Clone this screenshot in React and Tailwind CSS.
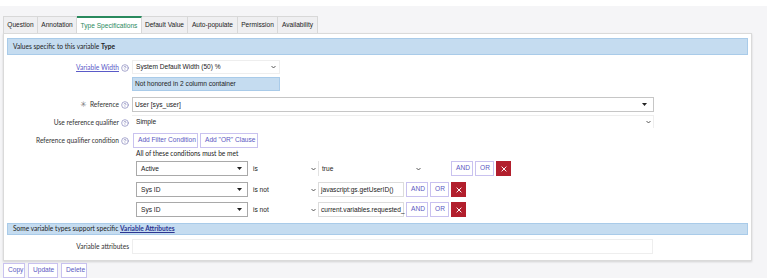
const arial = "font-['Liberation_Sans',Arial,sans-serif]";
const lato = "font-['Lato','Liberation_Sans',sans-serif]";

const Help = () => (
  <svg width="8" height="8" viewBox="0 0 24 24" fill="none" stroke="#8080b8" strokeWidth="2" strokeLinecap="round" className="shrink-0">
    <circle cx="12" cy="12" r="10" />
    <path d="M9.09 9a3 3 0 0 1 5.83 1c0 2-3 3-3 3" />
    <path d="M12 17h.01" />
  </svg>
);

const Chevron = () => (
  <svg width="5" height="4" viewBox="0 0 10 6" fill="none" stroke="#333" strokeWidth="1.6" className="shrink-0">
    <polyline points="1,1 5,5 9,1" />
  </svg>
);

const Caret = () => (
  <svg width="5" height="3" viewBox="0 0 10 6" className="shrink-0">
    <polygon points="0,0 10,0 5,6" fill="#222" />
  </svg>
);

const Tab = ({ label, w, active, first }) => (
  <div
    className={`h-[17px] flex items-center justify-center whitespace-nowrap border-r border-[#d8d8d8] text-[6.6px] ${arial} ${
      first ? 'border-l' : ''
    } ${
      active
        ? 'bg-white border-t-2 border-t-[#2a8a5e] text-[#2a8a5e]'
        : 'bg-[#efeff1] border-t border-t-[#d8d8d8] text-[#222]'
    }`}
    style={{ width: w }}
  >
    {label}
  </div>
);

const Btn = ({ children, className = '' }) => (
  <button
    className={`h-[15px] px-[4px] bg-white border border-[#c9c2ef] text-[#5b59c2] text-[6.6px] whitespace-nowrap ${arial} leading-none ${className}`}
  >
    {children}
  </button>
);

const Row = ({ label, help = true, children, className = '' }) => (
  <div className={`flex items-start ${className}`}>
    <div className={`w-[125px] h-[15px] flex items-center justify-end gap-[2px] pr-[3px] text-[6.6px] text-[#333] whitespace-nowrap ${lato}`}>
      {label}
      {help && <Help />}
    </div>
    {children}
  </div>
);

const Cond = ({ field, op, value, kind, gapLeft }) => (
  <div className={`flex items-center h-[15px] ${arial} text-[6.6px] text-[#222]`}>
    <div className="w-[112px] h-[15px] border border-[#a9a9a9] bg-white flex items-center justify-between pl-[4px] pr-[5px]">
      <span>{field}</span>
      <Caret />
    </div>
    <div className="w-[68px] h-[15px] ml-[2px] flex items-center justify-between pl-[3px] pr-[2px]">
      <span>{op}</span>
      <Chevron />
    </div>
    {kind === 'select' ? (
      <div className="w-[105px] h-[15px] border-l border-[#e2e2e2] flex items-center justify-between pl-[3px] pr-[2px]">
        <span>{value}</span>
        <Chevron />
      </div>
    ) : (
      <div className="w-[86px] h-[15px] border border-[#dcdcdc] flex items-center pl-[2px] whitespace-nowrap">
        {value}
      </div>
    )}
    <div className="flex items-center gap-[2px]" style={{ marginLeft: gapLeft }}>
      <Btn className="w-[22px] px-0">AND</Btn>
      <Btn className="w-[19px] px-0">OR</Btn>
      <div className="w-[15px] h-[15px] bg-[#b21f2d] flex items-center justify-center">
        <svg width="6" height="6" viewBox="0 0 10 10" stroke="white" strokeWidth="1.6">
          <line x1="1" y1="1" x2="9" y2="9" />
          <line x1="9" y1="1" x2="1" y2="9" />
        </svg>
      </div>
    </div>
  </div>
);

export default function App() {
  const tabs = [
    ['Question', 35],
    ['Annotation', 39],
    ['Type Specifications', 65],
    ['Default Value', 46],
    ['Auto-populate', 50],
    ['Permission', 40],
    ['Availability', 40],
  ];

  return (
    <div className="w-[767px] h-[278px] bg-[#f5f5f7] overflow-hidden">
      <div className="h-[6px] bg-white" />
      <div className="flex pl-[3px] pt-[10px]">
        {tabs.map(([t, w], i) => (
          <Tab key={t} label={t} w={w} first={i === 0} active={i === 2} />
        ))}
      </div>

      <div className="ml-[3px] w-[749px] bg-white border border-[#dadada] shadow-[0_1px_2px_rgba(0,0,0,0.15)] pt-[4px] pl-[3px] pr-[3px] pb-[6px]">
        <div className={`h-[17px] bg-[#c5dcf0] border border-[#a9cbe9] flex items-center pl-[5px] text-[6.6px] text-[#222] ${lato}`}>
          Values specific to this variable&nbsp;<b>Type</b>
        </div>

        <Row
          className="mt-[5px]"
          label={<span className="text-[#5a5ac8] underline">Variable Width</span>}
        >
          <div className="flex flex-col">
            <div className={`w-[148px] h-[14px] border border-[#eeeeee] flex items-center justify-between pl-[3px] pr-[3px] text-[6.6px] text-[#222] ${arial}`}>
              <span>System Default Width (50) %</span>
              <Chevron />
            </div>
            <div className={`w-[148px] h-[14px] mt-[3px] bg-[#c5dcf0] border border-[#a9cbe9] flex items-center pl-[2px] text-[6.6px] text-[#222] ${arial}`}>
              Not honored in 2 column container
            </div>
          </div>
        </Row>

        <Row
          className="mt-[6px]"
          label={
            <span className="flex items-center gap-[3px]">
              <span className="text-[#777] text-[8px] font-['DejaVu_Sans',sans-serif]">✳</span>
              Reference
            </span>
          }
        >
          <div className={`w-[522px] h-[15px] border border-[#c6c6c6] flex items-center justify-between pl-[2px] pr-[6px] text-[6.6px] text-[#222] ${arial}`}>
            <span>User [sys_user]</span>
            <Caret />
          </div>
        </Row>

        <Row className="mt-[3px]" label="Use reference qualifier">
          <div className={`w-[522px] h-[13px] border-t border-r border-[#eeeeee] flex items-center justify-between pl-[4px] pr-[2px] text-[6.6px] text-[#222] ${arial}`}>
            <span>Simple</span>
            <Chevron />
          </div>
        </Row>

        <Row className="mt-[3px]" label="Reference qualifier condition">
          <div className="flex flex-col">
            <div className="flex gap-[2px] ml-[1px]">
              <Btn className="w-[65px] px-0">Add Filter Condition</Btn>
              <Btn className="w-[58px] px-0">Add "OR" Clause</Btn>
            </div>
            <div className={`h-[10px] ml-[4px] text-[6.6px] leading-[10px] text-[#222] ${lato}`}>
              All of these conditions must be met
            </div>
            <div className="ml-[4px] mt-[3px] flex flex-col">
              <Cond field="Active" op="is" value="true" kind="select" gapLeft="28px" />
              <div className="mt-[6px]">
                <Cond field="Sys ID" op="is not" value="javascript:gs.getUserID()" kind="input" gapLeft="2px" />
              </div>
              <div className="mt-[5px]">
                <Cond field="Sys ID" op="is not" value="current.variables.requested_" kind="input" gapLeft="2px" />
              </div>
            </div>
          </div>
        </Row>

        <div className={`h-[12px] mt-[6px] bg-[#c5dcf0] border border-[#a9cbe9] flex items-center pl-[5px] text-[6.6px] text-[#222] ${lato}`}>
          Some variable types support specific&nbsp;
          <span className="font-bold text-[#2b3592] underline">Variable Attributes</span>
        </div>

        <Row className="mt-[4px]" label="Variable attributes" help={false}>
          <div className="w-[521px] h-[15px] border border-[#eeeeee]" />
        </Row>
      </div>

      <div className="flex gap-[3px] pl-[3px] mt-[2px]">
        <Btn className="w-[22px] px-0">Copy</Btn>
        <Btn className="w-[30px] px-0">Update</Btn>
        <Btn className="w-[26px] px-0">Delete</Btn>
      </div>
    </div>
  );
}
